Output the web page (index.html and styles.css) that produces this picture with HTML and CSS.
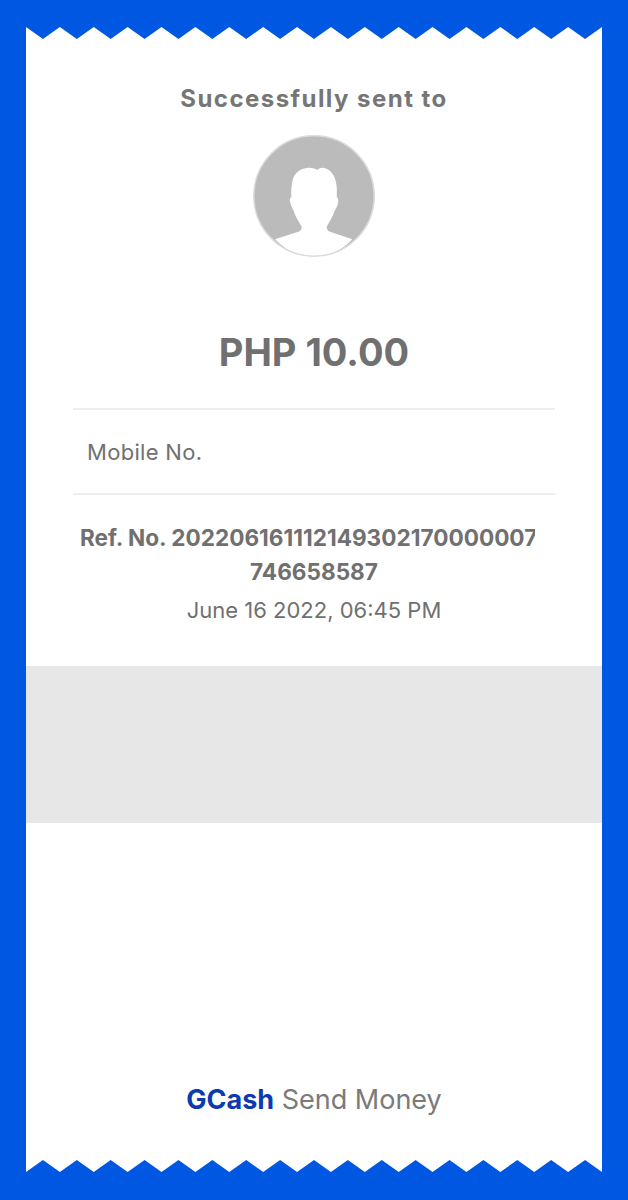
FILE: index.html
```html
<!DOCTYPE html>
<html lang="en">
<head>
    <meta charset="UTF-8">
    <meta name="viewport" content="width=device-width, initial-scale=1.0">
    <title>GCash Send Money</title>
    <link rel="stylesheet" href="styles.css">
</head>
<body>
    <div class="receipt">
        <svg class="edge" viewBox="0 0 34 12" preserveAspectRatio="none">
            <path fill="#fff" d="M0 12V0l1 12 1-12 1 12 1-12 1 12 1-12 1 12 1-12 1 12 1-12 1 12 1-12 1 12 1-12 1 12 1-12 1 12 1-12 1 12 1-12 1 12 1-12 1 12 1-12 1 12 1-12 1 12 1-12 1 12 1-12 1 12 1-12 1 12 1-12V12z"/>
        </svg>
        <div class="sheet">
            <h2 class="title">Successfully sent to</h2>
            <svg class="avatar" viewBox="0 0 122 122">
                <circle cx="61" cy="61" r="60.5" fill="#bbbbbb"/>
                <path fill="#fff" d="M64.3 35C61.5 33.4 58.5 32.6 55.3 32.8 47 33.4 41.5 38 39.6 45 38.3 50.5 38 56 38.4 61.7 37 63 36.6 65 37 66.7 37.8 70 38.9 72.5 40.3 75 42.5 82 46 87 48.7 91.7 49 94 47.5 95.8 45.3 96.7L22 104.3C33 116 46 121 61 121 76 121 89 116 99.3 104.3L77 96.7C74.8 95.8 73.3 94 73.7 91.7 76.5 87 79.5 82 82 75 83.5 72.5 85 70 85.3 66.7 85.6 65 85 63 83.7 61.7 84.2 56 83.9 50.5 82.5 45 80.5 38 75.5 33.4 70 32.8 68 32.6 66 33.5 64.3 35z"/>
                <circle cx="61" cy="61" r="60.2" fill="none" stroke="#dcdcdc" stroke-width="1.5"/>
            </svg>
            <div class="amount">PHP 10.00</div>
            <div class="mobile">Mobile No.</div>
            <div class="ref">
                <div class="ref-line">Ref. No. 2022061611121493021700000076</div>
                <div class="ref-rest">746658587</div>
            </div>
            <div class="date">June 16 2022, 06:45 PM</div>
            <div class="band"></div>
            <div class="footer"><span class="brand">GCash</span> Send Money</div>
        </div>
        <svg class="edge" viewBox="0 0 34 12" preserveAspectRatio="none">
            <path fill="#fff" d="M0 0V12l1-12 1 12 1-12 1 12 1-12 1 12 1-12 1 12 1-12 1 12 1-12 1 12 1-12 1 12 1-12 1 12 1-12 1 12 1-12 1 12 1-12 1 12 1-12 1 12 1-12 1 12 1-12 1 12 1-12 1 12 1-12 1 12 1-12 1 12V0z"/>
        </svg>
    </div>
</body>
</html>
```

FILE: styles.css
```css
body {
    margin: 0;
    height: 1200px;
    box-sizing: border-box;
    padding: 27px 26px 28px;
    background: #0057e2;
    font-family: Inter, "Liberation Sans", sans-serif;
    color: #707070;
}
.receipt {
    height: 100%;
    display: flex;
    flex-direction: column;
}
.edge {
    display: block;
    width: 100%;
    height: 12px;
    flex: none;
}
.sheet {
    flex: 1;
    background: #fff;
    display: flex;
    flex-direction: column;
    align-items: center;
}
.title {
    margin: 44px 0 0;
    font-size: 24px;
    line-height: 32px;
    font-weight: 700;
    letter-spacing: 1.45px;
    color: #767676;
}
.avatar {
    display: block;
    width: 122px;
    height: 122px;
    margin-top: 20px;
}
.amount {
    margin-top: 70px;
    font-size: 38px;
    line-height: 50px;
    font-weight: 700;
}
.mobile {
    align-self: stretch;
    margin: 31px 47px 0;
    padding: 1px 14px 0;
    height: 82px;
    line-height: 82px;
    font-size: 22px;
    letter-spacing: 0.3px;
    border-top: 2px solid #eeeeee;
    border-bottom: 2px solid #eeeeee;
}
.ref {
    align-self: stretch;
    margin-top: 26px;
    font-size: 22.6px;
    line-height: 34px;
    font-weight: 700;
    text-align: center;
}
.ref-line {
    width: 455px;
    margin-left: 54px;
    white-space: nowrap;
    overflow: hidden;
    text-align: left;
}
.date {
    margin-top: 5px;
    font-size: 22px;
    line-height: 32px;
}
.band {
    align-self: stretch;
    height: 157px;
    margin-top: 40px;
    background: #e7e7e7;
}
.footer {
    margin-top: auto;
    margin-bottom: 42px;
    font-size: 27px;
    line-height: 36px;
    color: #7a7a7a;
}
.brand {
    font-weight: 700;
    color: #0b3bb0;
}
```
